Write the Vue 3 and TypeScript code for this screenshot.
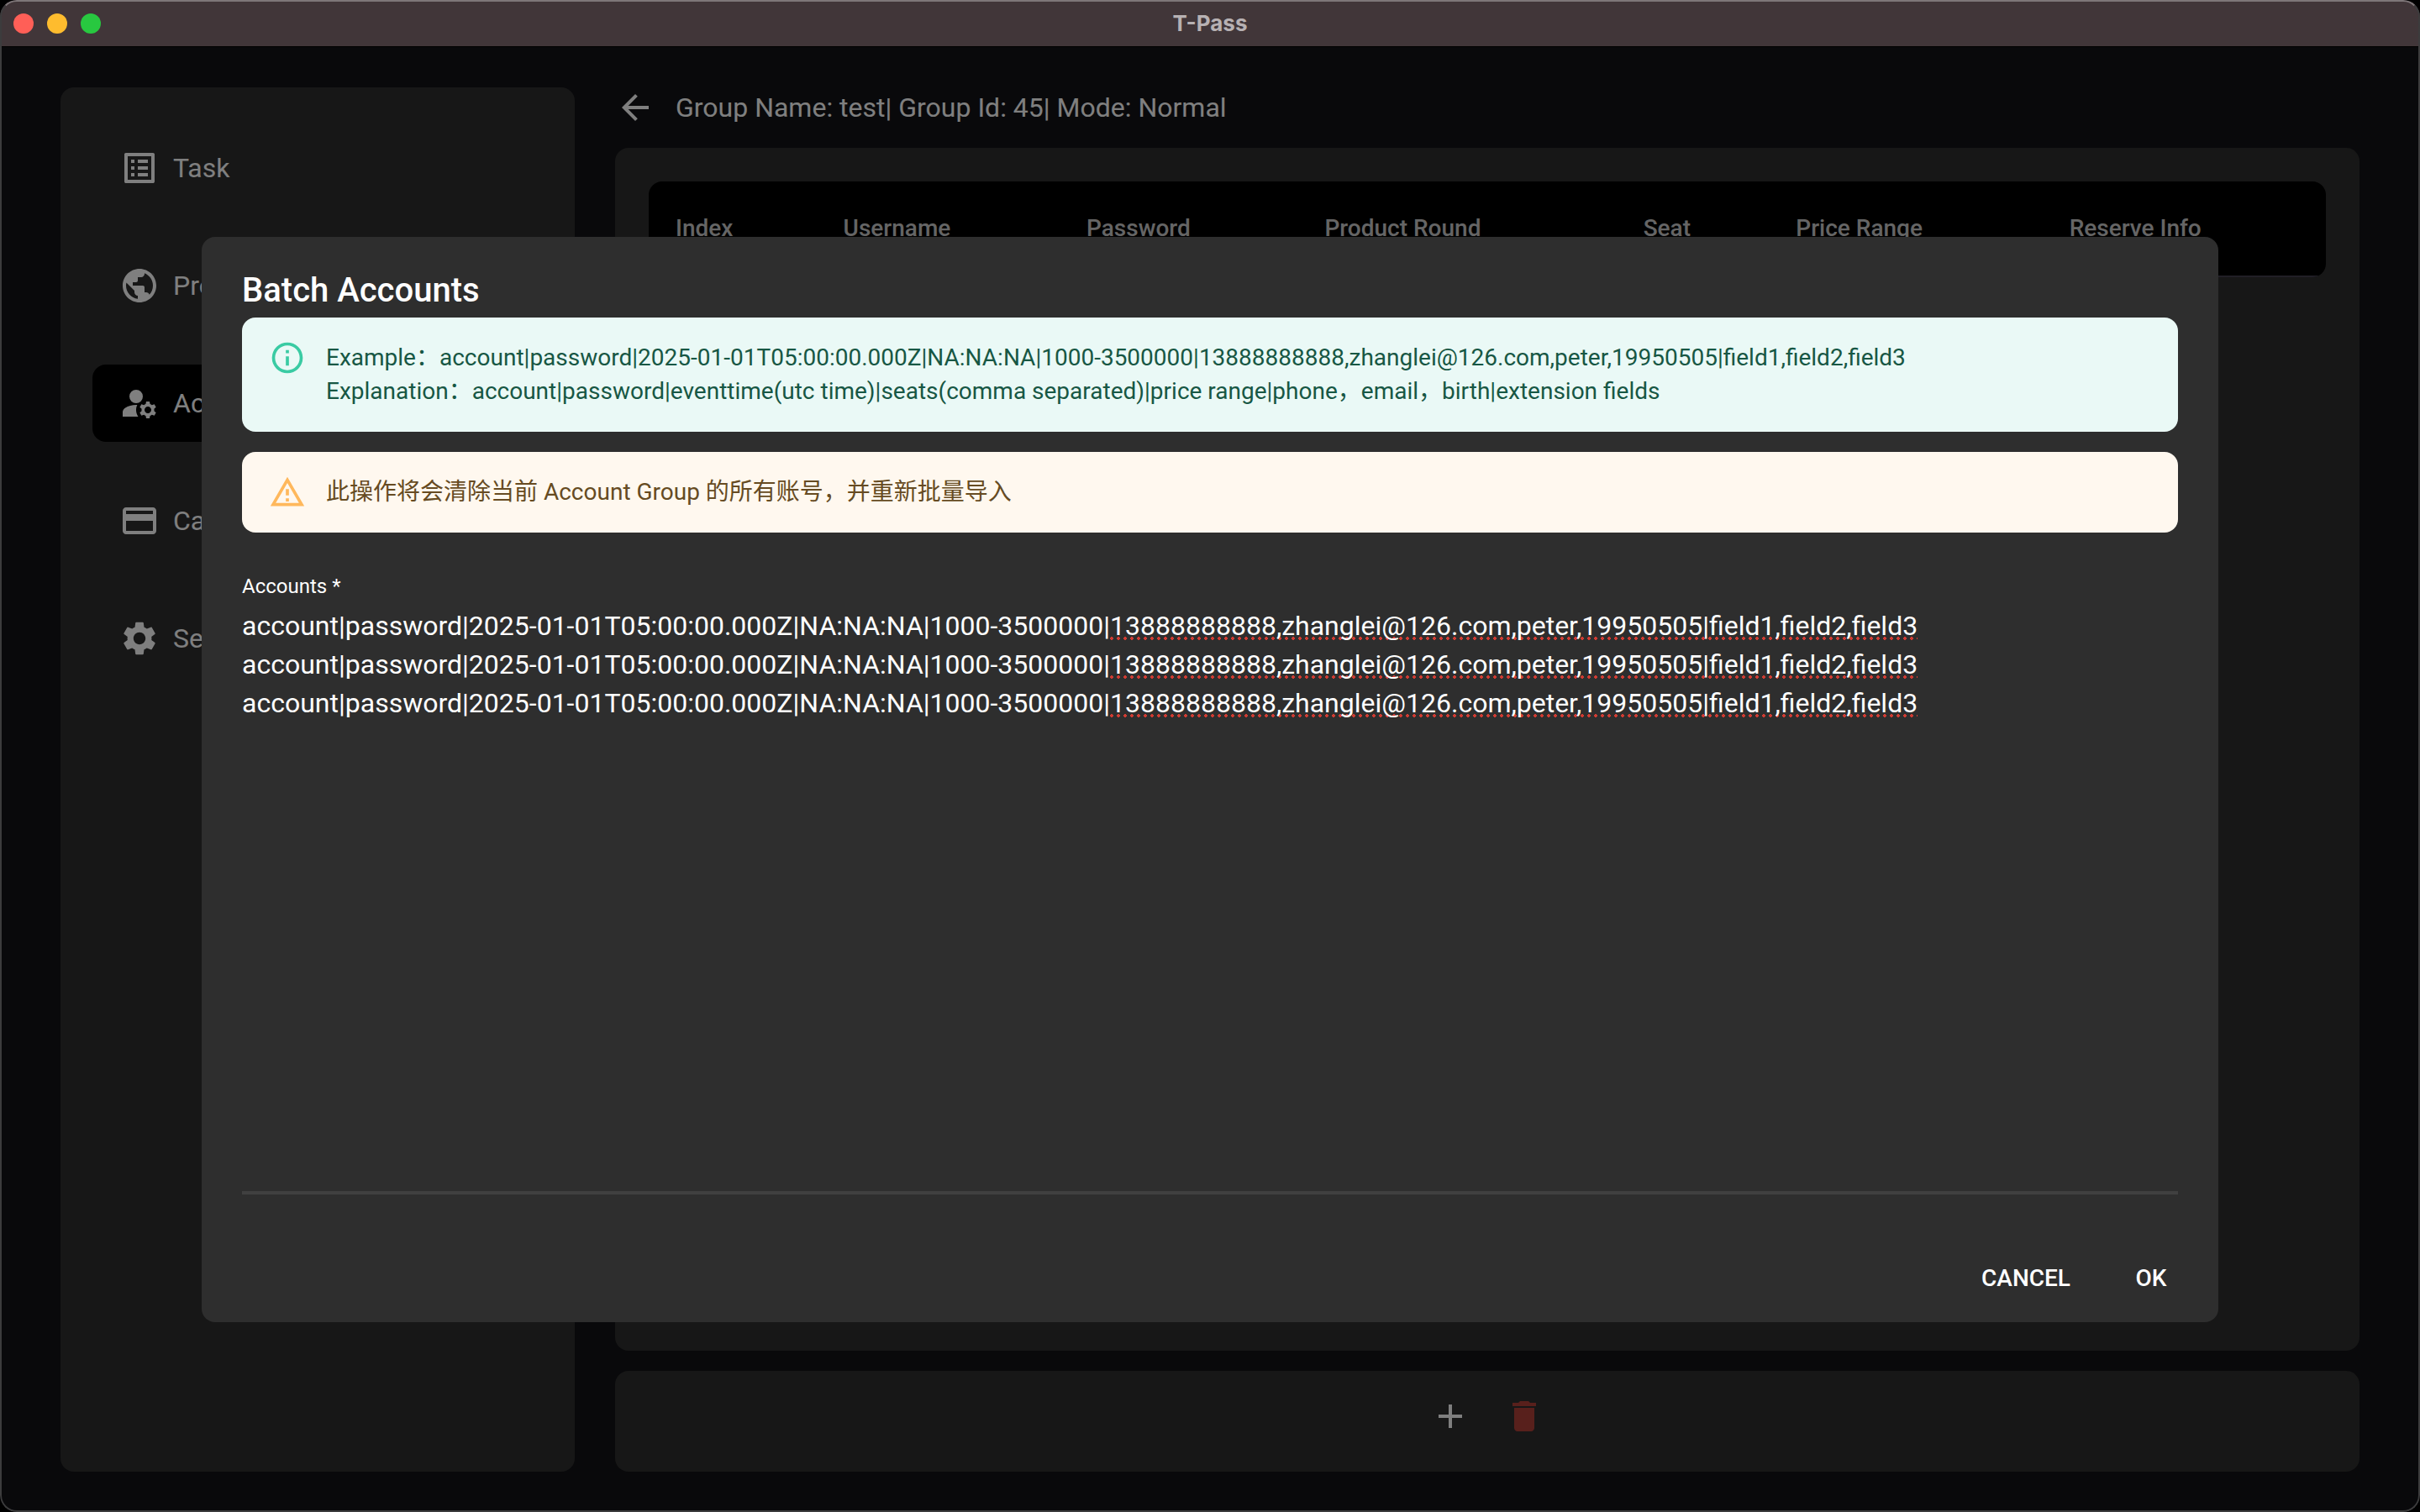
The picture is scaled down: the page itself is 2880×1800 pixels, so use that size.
<script setup lang="ts">
import { computed, ref } from 'vue'

interface NavItem {
  label: string
  icon: string
  active?: boolean
}

const navItems: NavItem[] = [
  {
    label: 'Task',
    icon: 'M19 5v14H5V5h14m1.1-2H3.9c-.5 0-.9.4-.9.9v16.2c0 .4.4.9.9.9h16.2c.4 0 .9-.5.9-.9V3.9c0-.5-.5-.9-.9-.9zM11 7h6v2h-6V7zm0 4h6v2h-6v-2zm0 4h6v2h-6zM7 7h2v2H7zm0 4h2v2H7zm0 4h2v2H7z',
  },
  {
    label: 'Proxy',
    icon: 'M12 2C6.48 2 2 6.48 2 12s4.48 10 10 10 10-4.48 10-10S17.52 2 12 2zm-1 17.93c-3.95-.49-7-3.85-7-7.93 0-.62.08-1.21.21-1.79L9 15v1c0 1.1.9 2 2 2v1.93zm6.9-2.54c-.26-.81-1-1.39-1.9-1.39h-1v-3c0-.55-.45-1-1-1H8v-2h2c.55 0 1-.45 1-1V7h2c1.1 0 2-.9 2-2v-.41c2.93 1.19 5 4.06 5 7.41 0 2.08-.8 3.97-2.1 5.39z',
  },
  {
    label: 'Account',
    active: true,
    icon: 'M10 4a4 4 0 1 0 0 8 4 4 0 1 0 0-8zM10.67 13.02c-.22-.01-.44-.02-.67-.02-2.42 0-4.68.67-6.61 1.82-.88.52-1.39 1.5-1.39 2.53V20h9.26c-.79-1.13-1.26-2.51-1.26-4 0-1.07.25-2.07.67-2.98zM20.75 16c0-.22-.03-.42-.06-.63l1.14-1.01-1-1.73-1.45.49c-.32-.27-.68-.48-1.08-.63L18 11h-2l-.3 1.49c-.4.15-.76.36-1.08.63l-1.45-.49-1 1.73 1.14 1.01c-.03.21-.06.41-.06.63s.03.42.06.63l-1.14 1.01 1 1.73 1.45-.49c.32.27.68.48 1.08.63L16 21h2l.3-1.49c.4-.15.76-.36 1.08-.63l1.45.49 1-1.73-1.14-1.01c.03-.21.06-.41.06-.63zM17 18c-1.1 0-2-.9-2-2s.9-2 2-2 2 .9 2 2-.9 2-2 2z',
  },
  {
    label: 'Card',
    icon: 'M20 4H4c-1.11 0-1.99.89-1.99 2L2 18c0 1.11.89 2 2 2h16c1.11 0 2-.89 2-2V6c0-1.11-.89-2-2-2zm0 14H4v-6h16v6zm0-10H4V6h16v2z',
  },
  {
    label: 'Settings',
    icon: 'M19.14 12.94c.04-.3.06-.61.06-.94 0-.32-.02-.64-.07-.94l2.03-1.58c.18-.14.23-.41.12-.61l-1.92-3.32c-.12-.22-.37-.29-.59-.22l-2.39.96c-.5-.38-1.03-.7-1.62-.94l-.36-2.54c-.04-.24-.24-.41-.48-.41h-3.84c-.24 0-.43.17-.47.41l-.36 2.54c-.59.24-1.13.57-1.62.94l-2.39-.96c-.22-.08-.47 0-.59.22L2.74 8.87c-.12.21-.08.47.12.61l2.03 1.58c-.05.3-.09.63-.09.94s.02.64.07.94l-2.03 1.58c-.18.14-.23.41-.12.61l1.92 3.32c.12.22.37.29.59.22l2.39-.96c.5.38 1.03.7 1.62.94l.36 2.54c.05.24.24.41.48.41h3.84c.24 0 .44-.17.47-.41l.36-2.54c.59-.24 1.13-.56 1.62-.94l2.39.96c.22.08.47 0 .59-.22l1.92-3.32c.12-.22.07-.47-.12-.61l-2.01-1.58zM12 15.6c-1.98 0-3.6-1.62-3.6-3.6s1.62-3.6 3.6-3.6 3.6 1.62 3.6 3.6-1.62 3.6-3.6 3.6z',
  },
]

const columns = [
  { label: 'Index', width: '10%' },
  { label: 'Username', width: '14.5%' },
  { label: 'Password', width: '14.2%' },
  { label: 'Product Round', width: '19%' },
  { label: 'Seat', width: '9.1%' },
  { label: 'Price Range', width: '16.3%' },
  { label: 'Reserve Info', width: '16.9%' },
]

const example =
  'account|password|2025-01-01T05:00:00.000Z|NA:NA:NA|1000-3500000|13888888888,zhanglei@126.com,peter,19950505|field1,field2,field3'
const accounts = ref([example, example, example].join('\n'))
const open = ref(true)

// Everything from the phone number on is what the spell checker marks.
const FLAG_START = '13888888888'
const pen = document.createElement('canvas').getContext('2d')!
pen.font = '32px Roboto, "Noto Sans CJK SC", sans-serif'
const textWidth = (text: string): number => Math.round(pen.measureText(text).width)

const marks = computed(() =>
  accounts.value.split('\n').map((line) => {
    const at = line.indexOf(FLAG_START)
    if (at < 0) return { marginLeft: '0', width: '0' }
    const start = textWidth(line.slice(0, at))
    return { marginLeft: `${start}px`, width: `${textWidth(line) - start}px` }
  }),
)
</script>

<template>
  <div class="window">
    <header class="titlebar">
      <div class="lights">
        <button class="light close" aria-label="Close"></button>
        <button class="light minimise" aria-label="Minimise"></button>
        <button class="light zoom" aria-label="Zoom"></button>
      </div>
      <span class="app-name">T-Pass</span>
    </header>

    <div class="stage">
      <div class="page">
        <nav class="sidebar">
          <a
            v-for="item in navItems"
            :key="item.label"
            href="#"
            class="nav-item"
            :class="{ active: item.active }"
          >
            <svg class="icon" viewBox="0 0 24 24"><path :d="item.icon" /></svg>
            <span>{{ item.label }}</span>
          </a>
        </nav>

        <main class="main">
          <div class="heading">
            <button class="plain" aria-label="Back">
              <svg class="icon" viewBox="0 0 24 24">
                <path d="M20 11H7.83l5.59-5.59L12 4l-8 8 8 8 1.41-1.41L7.83 13H20v-2z" />
              </svg>
            </button>
            <span>Group Name: test| Group Id: 45| Mode: Normal</span>
          </div>

          <section class="panel list">
            <table class="table">
              <colgroup>
                <col v-for="c in columns" :key="c.label" :style="{ width: c.width }" />
              </colgroup>
              <thead>
                <tr>
                  <th v-for="c in columns" :key="c.label" scope="col">{{ c.label }}</th>
                </tr>
              </thead>
            </table>
          </section>

          <section class="panel tools">
            <button class="plain tool" aria-label="Add">
              <svg class="icon" viewBox="0 0 24 24"><path d="M19 13h-6v6h-2v-6H5v-2h6V5h2v6h6v2z" /></svg>
            </button>
            <button class="plain tool danger" aria-label="Delete">
              <svg class="icon" viewBox="0 0 24 24">
                <path d="M6 19c0 1.1.9 2 2 2h8c1.1 0 2-.9 2-2V7H6v12zM19 4h-3.5l-1-1h-5l-1 1H5v2h14V4z" />
              </svg>
            </button>
          </section>
        </main>
      </div>

      <div v-if="open" class="backdrop">
        <div class="dialog" role="dialog" aria-modal="true" aria-labelledby="dialog-title">
          <h2 id="dialog-title" class="dialog-title">Batch Accounts</h2>

          <div class="dialog-body">
            <div class="alert info" role="note">
              <svg class="alert-icon" viewBox="0 0 24 24">
                <path d="M11,9H13V7H11M12,20C7.59,20 4,16.41 4,12C4,7.59 7.59,4 12,4C16.41,4 20,7.59 20,12C20,16.41 16.41,20 12,20M12,2A10,10 0 0,0 2,12A10,10 0 0,0 12,22A10,10 0 0,0 22,12A10,10 0 0,0 12,2M11,17H13V11H11V17Z" />
              </svg>
              <div class="message" lang="zh-CN">
                <div>Example：{{ example }}</div>
                <div>Explanation：account|password|eventtime(utc time)|seats(comma separated)|price range|phone，email，birth|extension fields</div>
              </div>
            </div>

            <div class="alert warning" role="alert">
              <svg class="alert-icon" viewBox="0 0 24 24">
                <path d="M12 5.99L19.53 19H4.47L12 5.99M12 2L1 21h22L12 2zm1 14h-2v2h2v-2zm0-6h-2v4h2v-4z" />
              </svg>
              <div class="message" lang="zh-CN">此操作将会清除当前 Account Group 的所有账号，并重新批量导入</div>
            </div>

            <div class="field">
              <label for="accounts">Accounts *</label>
              <div class="editor">
                <div class="marks" aria-hidden="true">
                  <div v-for="(mark, i) in marks" :key="i" class="mark" :style="mark"></div>
                </div>
                <textarea id="accounts" v-model="accounts" rows="15" required spellcheck="false"></textarea>
              </div>
            </div>
          </div>

          <div class="actions">
            <button class="action" @click="open = false">CANCEL</button>
            <button class="action" @click="open = false">OK</button>
          </div>
        </div>
      </div>
    </div>
  </div>
</template>

<style>
body {
  background: #000;
}
</style>

<style scoped>
.window,
.window * {
  box-sizing: border-box;
}

.window {
  position: relative;
  display: flex;
  flex-direction: column;
  min-height: 100vh;
  overflow: hidden;
  border-radius: 20px;
  background: #121216;
  color: #fff;
  font-family: Roboto, 'Noto Sans CJK SC', sans-serif;
  font-size: 32px;
  line-height: 48px;
}

/* Hairline frame the desktop draws round the window */
.window::after {
  content: '';
  position: absolute;
  inset: 0;
  border: 2px solid #3c3c3d;
  border-top-color: #7d7678;
  border-radius: 20px;
  pointer-events: none;
}

.titlebar {
  display: grid;
  grid-template-columns: 1fr auto 1fr;
  align-items: center;
  height: 56px;
  padding: 0 16px;
  background: #413639;
  border-bottom: 1px solid #000;
}

.lights {
  display: flex;
  gap: 16px;
}

.light {
  width: 24px;
  height: 24px;
  padding: 0;
  border: 0;
  border-radius: 50%;
}

.close {
  background: #ff5f57;
}

.minimise {
  background: #febc2e;
}

.zoom {
  background: #28c840;
}

.app-name {
  color: #b7b1b3;
  font-family: Inter, sans-serif;
  font-size: 26px;
  font-weight: 700;
  line-height: 32px;
}

.stage {
  position: relative;
  display: flex;
  flex: 1;
}

.page {
  display: grid;
  flex: 1;
  grid-template-columns: minmax(0, 612fr) minmax(0, 2076fr);
  gap: 48px;
  padding: 48px 72px;
}

.icon {
  display: block;
  flex: none;
  width: 48px;
  height: 48px;
  fill: currentColor;
}

.plain {
  padding: 0;
  border: 0;
  background: none;
  color: inherit;
}

.sidebar {
  display: flex;
  flex-direction: column;
  gap: 48px;
  padding: 50px 38px;
  border-radius: 16px;
  background: #2e2e2e;
}

.nav-item {
  display: flex;
  align-items: center;
  gap: 16px;
  padding: 22px 32px;
  border-radius: 16px;
  color: #fff;
  text-decoration: none;
}

.nav-item.active {
  background: #000;
}

.main {
  display: flex;
  flex-direction: column;
  gap: 24px;
}

.heading {
  display: flex;
  align-items: center;
  gap: 24px;
}

.panel {
  border-radius: 16px;
  background: #2e2e2e;
}

.list {
  flex: 1;
  padding: 40px;
}

.table {
  width: 100%;
  table-layout: fixed;
  border-collapse: separate;
  border-spacing: 0;
  overflow: hidden;
  border-radius: 16px;
  background: #000;
}

.table th {
  padding: 32px;
  border-bottom: 2px solid #423f4d;
  color: #cbcbcb;
  font-size: 28px;
  font-weight: 500;
  line-height: 48px;
  text-align: left;
}

.tools {
  display: flex;
  justify-content: center;
  gap: 8px;
  padding: 14px 0 26px;
}

.tool {
  padding: 16px;
}

.danger {
  color: #b04039;
}

.backdrop {
  position: absolute;
  inset: 0;
  display: flex;
  align-items: center;
  justify-content: center;
  padding: 64px;
  background: rgba(0, 0, 0, 0.5);
}

.dialog {
  width: 100%;
  max-width: 2400px;
  border-radius: 16px;
  background: #2e2e2e;
}

.dialog-title {
  margin: 0;
  padding: 32px 48px 0;
  font-size: 40px;
  font-weight: 500;
  line-height: 64px;
}

.dialog-body {
  display: flex;
  flex-direction: column;
  gap: 24px;
  padding: 0 48px 64px;
}

.alert {
  display: flex;
  gap: 24px;
  padding: 12px 32px;
  border-radius: 16px;
  font-size: 28px;
  line-height: 40px;
}

.alert-icon {
  flex: none;
  width: 44px;
  height: 44px;
  margin: 14px 0;
  fill: currentColor;
}

.message {
  padding: 16px 0;
}

.info {
  background: #eaf9f6;
  color: #3acba3;
}

.info .message {
  color: #175744;
}

.warning {
  background: #fff8ef;
  color: #ffb85c;
}

.warning .message {
  color: #664b22;
}

.field {
  display: flex;
  flex-direction: column;
  gap: 8px;
  padding-top: 24px;
}

.field label {
  font-size: 24px;
  line-height: 32px;
}

/* The spelling marks lie behind the text box, in the same grid cell */
.editor {
  display: grid;
  border-bottom: 4px solid #404040;
}

.marks,
.editor textarea {
  grid-area: 1 / 1;
}

/* One mark per line of text: a row of dots under the baseline */
.mark {
  height: 46px;
  padding-bottom: 6px;
  background: radial-gradient(circle, #d03c33 50%, transparent 60%) 0 0 / 8px 4px content-box;
  background: radial-gradient(circle at 2px 2px, #d03c33 0 2px, transparent 2px) left bottom / 8px 4px repeat-x
    content-box;
}

.editor textarea {
  position: relative;
  width: 100%;
  margin: 0;
  padding: 0 0 6px;
  overflow: hidden;
  border: 0;
  outline: 0;
  background: transparent;
  color: #fff;
  font-family: inherit;
  font-size: 32px;
  line-height: 46px;
  resize: none;
}

.actions {
  display: flex;
  justify-content: flex-end;
  gap: 16px;
  padding: 0 16px 16px;
}

.action {
  min-width: 128px;
  padding: 12px 16px;
  border: 0;
  border-radius: 8px;
  background: none;
  color: #fff;
  font-family: inherit;
  font-size: 28px;
  font-weight: 500;
  line-height: 48px;
}
</style>
